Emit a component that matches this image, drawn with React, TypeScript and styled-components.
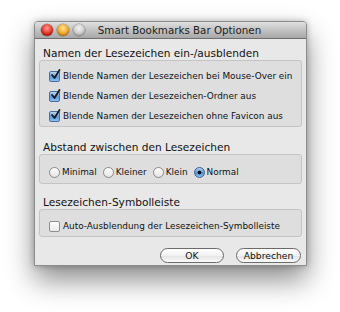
import React from 'react'
import styled, { createGlobalStyle } from 'styled-components'

const GlobalStyle = createGlobalStyle`
  html, body {
    margin: 0;
    padding: 0;
    background: #ffffff;
  }
  body {
    font-family: "DejaVu Sans", "Liberation Sans", sans-serif;
    color: #111;
  }
`

const Page = styled.div`
  width: 340px;
  height: 312px;
  padding: 21px 0 0 34px;
  box-sizing: border-box;
  overflow: hidden;
`

const Window = styled.div`
  width: 273px;
  height: 245px;
  background: #e8e8e8;
  border: 1px solid #8c8c8c;
  box-sizing: border-box;
  border-radius: 4px 4px 0 0;
  box-shadow: 0 14px 28px rgba(0, 0, 0, 0.45), 0 0 6px rgba(0, 0, 0, 0.25);
  display: flex;
  flex-direction: column;
`

const TitleBar = styled.div`
  height: 16px;
  display: flex;
  align-items: center;
  padding: 0 6px;
  background: linear-gradient(#e0e0e0, #bdbdbd 60%, #a8a8a8);
  border-bottom: 1px solid #6f6f6f;
  border-radius: 3px 3px 0 0;
`

const Lights = styled.div`
  display: flex;
  gap: 4px;
`

const Light = styled.span<{ $c: string }>`
  width: 12px;
  height: 12px;
  border-radius: 50%;
  background: ${p => p.$c};
  box-shadow: inset 0 -1px 2px rgba(0, 0, 0, 0.25), 0 0 0 0.5px rgba(0, 0, 0, 0.35);
`

const Title = styled.div`
  flex: 1;
  text-align: center;
  font-size: 10.3px;
  color: #1c1c1c;
  padding-right: 26px;
  white-space: nowrap;
`

const Body = styled.div`
  flex: 1;
  padding: 7px 4px 0 4px;
  display: flex;
  flex-direction: column;
`

const Section = styled.div<{ $top: number }>`
  margin-top: ${p => p.$top}px;
`

const Heading = styled.div`
  height: 14px;
  line-height: 14px;
  font-size: 10.6px;
  padding-left: 4px;
  color: #111;
`

const GroupBox = styled.div<{ $pt: number; $pb: number }>`
  background: #dedede;
  border: 1px solid #c4c4c4;
  border-radius: 3px;
  padding: ${p => p.$pt}px 6px ${p => p.$pb}px 9px;
`

const Row = styled.label`
  height: 20px;
  display: flex;
  align-items: center;
  gap: 3px;
  font-size: 8.9px;
  color: #111;
  white-space: nowrap;
`

const RadioRow = styled.div`
  height: 20px;
  display: flex;
  align-items: center;
  gap: 6px;
`

const RadioItem = styled.span`
  display: flex;
  align-items: center;
  gap: 2px;
  font-size: 8.9px;
  color: #111;
`

const Box = styled.span<{ $on?: boolean }>`
  width: 9px;
  height: 9px;
  border-radius: 2px;
  border: 1px solid ${p => (p.$on ? '#4a6da0' : '#8e8e8e')};
  background: ${p =>
    p.$on ? 'linear-gradient(#b9d5f2, #5b9ae0 55%, #8cc0f3)' : 'linear-gradient(#fdfdfd, #e9e9e9)'};
  position: relative;
  flex: none;
`

const Check = styled.svg`
  position: absolute;
  left: 0px;
  top: -3px;
`

const Radio = styled.span<{ $on?: boolean }>`
  width: 9px;
  height: 9px;
  border-radius: 50%;
  border: 1px solid ${p => (p.$on ? '#3f5f8f' : '#8a8a8a')};
  background: ${p =>
    p.$on ? 'radial-gradient(circle, #111 0 1.6px, transparent 2.2px), linear-gradient(#b6d3f3, #4d8fd9 55%, #8fc3f5)' : 'linear-gradient(#fdfdfd, #e4e4e4)'};
  flex: none;
`

const Buttons = styled.div`
  margin-top: 11px;
  display: flex;
  justify-content: flex-end;
  gap: 12px;
  padding-right: 1px;
`

const Button = styled.button<{ $w: number }>`
  width: ${p => p.$w}px;
  height: 15px;
  padding: 0;
  border-radius: 8px;
  border: 1px solid #6b6b6b;
  background: linear-gradient(#ffffff, #f1f1f1 50%, #e2e2e2 51%, #fafafa);
  font-family: inherit;
  font-size: 9.2px;
  color: #111;
  line-height: 13px;
`

const CheckMark = () => (
  <Check width="11" height="11" viewBox="0 0 11 11">
    <path d="M2 6 L4.5 9 L9.5 1" stroke="#1b1b1b" strokeWidth="1.8" fill="none" strokeLinecap="round" strokeLinejoin="round" />
  </Check>
)

const CheckRow = ({ on, text }: { on?: boolean; text: string }) => (
  <Row>
    <Box $on={on}>{on && <CheckMark />}</Box>
    {text}
  </Row>
)

const App = () => {
  return (
    <Page>
      <GlobalStyle />
      <Window>
        <TitleBar>
          <Lights>
            <Light $c="radial-gradient(circle at 50% 35%, #ff9c8f, #e0281a 60%, #a8120a)" />
            <Light $c="radial-gradient(circle at 50% 35%, #ffe29a, #f0a21c 60%, #b9700a)" />
            <Light $c="radial-gradient(circle at 50% 35%, #f2f2f2, #c9c9c9 60%, #a5a5a5)" />
          </Lights>
          <Title>Smart Bookmarks Bar Optionen</Title>
        </TitleBar>
        <Body>
          <Section $top={0}>
            <Heading>Namen der Lesezeichen ein-/ausblenden</Heading>
            <GroupBox $pt={5} $pb={0}>
              <CheckRow on text="Blende Namen der Lesezeichen bei Mouse-Over ein" />
              <CheckRow on text="Blende Namen der Lesezeichen-Ordner aus" />
              <CheckRow on text="Blende Namen der Lesezeichen ohne Favicon aus" />
            </GroupBox>
          </Section>
          <Section $top={13}>
            <Heading>Abstand zwischen den Lesezeichen</Heading>
            <GroupBox $pt={7} $pb={1}>
              <RadioRow>
                <RadioItem><Radio />Minimal</RadioItem>
                <RadioItem><Radio />Kleiner</RadioItem>
                <RadioItem><Radio />Klein</RadioItem>
                <RadioItem><Radio $on />Normal</RadioItem>
              </RadioRow>
            </GroupBox>
          </Section>
          <Section $top={11}>
            <Heading>Lesezeichen-Symbolleiste</Heading>
            <GroupBox $pt={6} $pb={0}>
              <CheckRow text="Auto-Ausblendung der Lesezeichen-Symbolleiste" />
            </GroupBox>
          </Section>
          <Buttons>
            <Button $w={64}>OK</Button>
            <Button $w={65}>Abbrechen</Button>
          </Buttons>
        </Body>
      </Window>
    </Page>
  )
}

export default App
